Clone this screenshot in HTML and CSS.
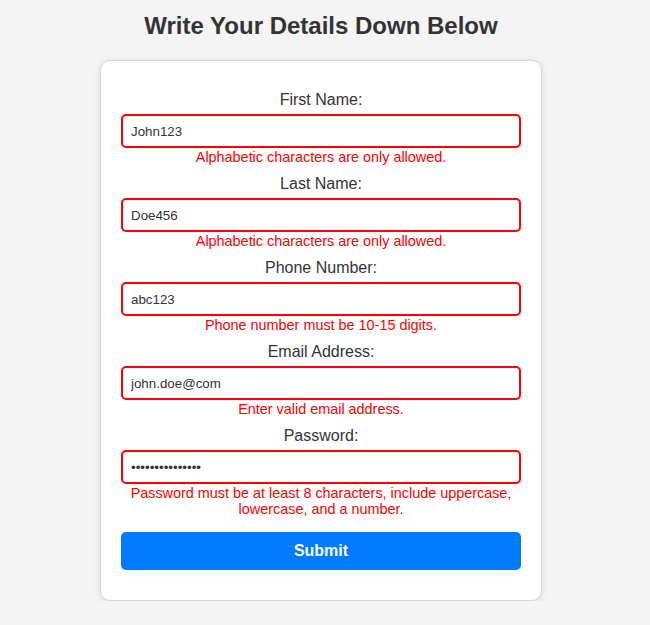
FILE: index.html
```html
<!DOCTYPE html>
<html>
<head>
<meta charset="utf-8">
<link rel="stylesheet" href="styles.css">
</head>
<body>
<div class="page">
  <h1 class="title">Write Your Details Down Below</h1>
  <form class="card">
    <div class="group">
      <label class="label">First Name:</label>
      <input class="field" type="text" value="John123">
      <div class="error">Alphabetic characters are only allowed.</div>
    </div>
    <div class="group">
      <label class="label">Last Name:</label>
      <input class="field" type="text" value="Doe456">
      <div class="error">Alphabetic characters are only allowed.</div>
    </div>
    <div class="group">
      <label class="label">Phone Number:</label>
      <input class="field" type="text" value="abc123">
      <div class="error">Phone number must be 10-15 digits.</div>
    </div>
    <div class="group">
      <label class="label">Email Address:</label>
      <input class="field" type="text" value="john.doe@com">
      <div class="error">Enter valid email address.</div>
    </div>
    <div class="group">
      <label class="label">Password:</label>
      <input class="field" type="password" value="password1234567">
      <div class="error">Password must be at least 8 characters, include uppercase, lowercase, and a number.</div>
    </div>
    <button class="submit" type="button">Submit</button>
  </form>
</div>
</body>
</html>
```
FILE: styles.css
```css
html, body {
  margin: 0;
  padding: 0;
  background: #f4f4f4;
  font-family: "Liberation Sans", Arial, sans-serif;
  color: #333;
}
.page {
  display: flex;
  flex-direction: column;
  align-items: center;
  padding: 12px 8px 0 0;
}
.title {
  margin: 0 0 20px;
  font-size: 24px;
  line-height: 28px;
  font-weight: bold;
  color: #333;
}
.card {
  box-sizing: content-box;
  width: 400px;
  background: #fff;
  border: 1px solid #d6d6d6;
  border-radius: 10px;
  box-shadow: 0 1px 8px rgba(0,0,0,0.1);
  padding: 30px 20px 30px;
  display: flex;
  flex-direction: column;
}
.group {
  display: flex;
  flex-direction: column;
  align-items: center;
  margin-bottom: 10px;
}
.label {
  font-size: 16px;
  line-height: 18px;
  margin-bottom: 5px;
  color: #333;
}
.field {
  box-sizing: border-box;
  width: 100%;
  height: 34px;
  padding: 0 8px;
  border: 2px solid #ff0000;
  border-radius: 5px;
  font-family: "Liberation Sans", Arial, sans-serif;
  font-size: 13.33px;
  color: #333;
  background: #fff;
  outline: none;
}
.error {
  margin-top: 1px;
  font-size: 14.4px;
  line-height: 16px;
  color: #ff0000;
  text-align: center;
}
.submit {
  margin-top: 5px;
  height: 38px;
  border: none;
  border-radius: 5px;
  background: #007bff;
  color: #fff;
  font-family: "Liberation Sans", Arial, sans-serif;
  font-size: 16px;
  font-weight: bold;
}
```
